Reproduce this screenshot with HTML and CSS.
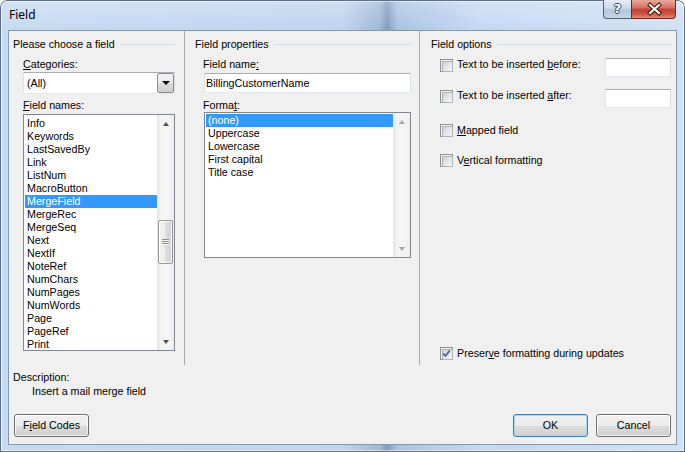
FILE: index.html
```html
<!DOCTYPE html>
<html lang="en">

<head>
  <meta charset="UTF-8">
  <meta name="viewport" content="width=device-width, initial-scale=1.0">
  <title>Field</title>
  <link rel="stylesheet" href="styles.css">
</head>

<body>
  <div class="window">
    <div class="titlebar">
      <span class="title">Field</span>
      <div class="caption-buttons">
        <div class="cap-btn help">?</div>
        <div class="cap-btn close">
          <svg width="45" height="19" viewBox="0 0 45 19">
            <path d="M18 5 L27 13 M27 5 L18 13" stroke="#3b1510" stroke-width="4.2" stroke-linecap="square" fill="none" />
            <path d="M18 5 L27 13 M27 5 L18 13" stroke="#ffffff" stroke-width="2.2" stroke-linecap="square" fill="none" />
          </svg>
        </div>
      </div>
    </div>

    <div class="client">
      <div class="columns">
        <!-- field picker -->
        <div class="col col-left">
          <div class="group-title">Please choose a field</div>
          <div class="group-body">
            <div class="label"><u>C</u>ategories:</div>
            <div class="combo">
              <span class="combo-text">(All)</span>
              <span class="combo-btn"><span class="tri-down"></span></span>
            </div>
            <div class="label label-gap"><u>F</u>ield names:</div>
            <div class="listbox names">
              <ul class="items">
                <li>Info</li>
                <li>Keywords</li>
                <li>LastSavedBy</li>
                <li>Link</li>
                <li>ListNum</li>
                <li>MacroButton</li>
                <li class="selected">MergeField</li>
                <li>MergeRec</li>
                <li>MergeSeq</li>
                <li>Next</li>
                <li>NextIf</li>
                <li>NoteRef</li>
                <li>NumChars</li>
                <li>NumPages</li>
                <li>NumWords</li>
                <li>Page</li>
                <li>PageRef</li>
                <li>Print</li>
              </ul>
              <div class="vscroll">
                <div class="arrow"><span class="tri-up"></span></div>
                <div class="track"><div class="thumb"><span class="grip"></span></div></div>
                <div class="arrow"><span class="tri-down small"></span></div>
              </div>
            </div>
          </div>
        </div>

        <!-- properties -->
        <div class="col col-mid">
          <div class="group-title">Field properties</div>
          <div class="group-body">
            <div class="label">Field name<u>:</u></div>
            <div class="textbox name-box">BillingCustomerName</div>
            <div class="label label-gap2">Forma<u>t</u>:</div>
            <div class="listbox formats">
              <ul class="items">
                <li class="selected">(none)</li>
                <li>Uppercase</li>
                <li>Lowercase</li>
                <li>First capital</li>
                <li>Title case</li>
              </ul>
              <div class="vscroll disabled">
                <div class="arrow"><span class="tri-up"></span></div>
                <div class="track"></div>
                <div class="arrow"><span class="tri-down small"></span></div>
              </div>
            </div>
          </div>
        </div>

        <!-- options -->
        <div class="col col-right">
          <div class="group-title">Field options</div>
          <div class="group-body options">
            <div class="opt opt-input first">
              <span class="check"></span>
              <span>Text to be inserted <u>b</u>efore:</span>
              <span class="textbox small-box"></span>
            </div>
            <div class="opt opt-input second">
              <span class="check"></span>
              <span>Text to be inserted <u>a</u>fter:</span>
              <span class="textbox small-box"></span>
            </div>
            <div class="opt mapped">
              <span class="check"></span>
              <span><u>M</u>apped field</span>
            </div>
            <div class="opt vertical">
              <span class="check"></span>
              <span>V<u>e</u>rtical formatting</span>
            </div>
            <div class="opt preserve">
              <span class="check checked">
                <svg width="9" height="9" viewBox="0 0 9 9">
                  <path d="M1.2 4.6 L3.5 7 L7.8 1.4" stroke="#4c5f8c" stroke-width="1.7" fill="none" />
                </svg>
              </span>
              <span>Preser<u>v</u>e formatting during updates</span>
            </div>
          </div>
        </div>
      </div>

      <div class="desc">Description:</div>
      <div class="desc-text">Insert a mail merge field</div>

      <div class="button-row">
        <button class="btn">F<u>i</u>eld Codes</button>
        <button class="btn default">OK</button>
        <button class="btn cancel">Cancel</button>
      </div>
    </div>
  </div>
</body>

</html>
```

FILE: styles.css
```css
* {
  box-sizing: border-box;
}

body {
  margin: 0;
  font-family: "Liberation Sans", Arial, sans-serif;
  font-size: 10.7px;
  line-height: 13px;
  color: #000;
  background: #fff;
}

u {
  text-decoration: underline;
}

/* aero frame */
.window {
  width: 685px;
  height: 452px;
  display: flex;
  flex-direction: column;
  padding: 0 8px 7px;
  border-radius: 7px 7px 0 0;
  background:
    linear-gradient(180deg, rgba(255, 255, 255, 0.25), rgba(255, 255, 255, 0) 30px),
    linear-gradient(90deg, #c6dbf2 0%, #bdd5ef 50%, #9fb9d6 55.5%, #7e9cbd 56.5%, #a9c4e2 58%, #c3d9f2 70%, #cfe2f6 100%);
  box-shadow: inset 0 0 0 1px #5d6f85, inset 0 0 0 2px rgba(255, 255, 255, 0.55);
}

.titlebar {
  height: 30px;
  display: flex;
  align-items: flex-start;
  padding-left: 1px;
}

.title {
  font-family: "Noto Sans", "Open Sans", sans-serif;
  font-size: 12px;
  line-height: 16px;
  margin-top: 7px;
}

.caption-buttons {
  display: flex;
  margin-left: auto;
  margin-right: 1px;
}

.cap-btn {
  height: 19px;
  border: 1px solid #4e5f74;
  border-top: none;
}

.help {
  width: 28px;
  border-right: none;
  border-radius: 0 0 0 4px;
  background: linear-gradient(180deg, #e4edf7 0%, #cbd9ea 45%, #b3c6dc 55%, #c5d6ea 100%);
  color: #fff;
  font-family: "DejaVu Sans", sans-serif;
  font-weight: bold;
  font-size: 13px;
  line-height: 18px;
  text-align: center;
  text-shadow: 1px 0 0 #34435a, -1px 0 0 #34435a, 0 1px 0 #34435a, 0 -1px 0 #34435a;
}

.close {
  width: 45px;
  border-color: #6e2a22;
  border-radius: 0 0 4px 0;
  background: linear-gradient(180deg, #e9a99b 0%, #d8786a 40%, #c2402f 55%, #cf5a45 80%, #e2917c 100%);
}

.close svg {
  display: block;
}

/* dialog body */
.client {
  flex: 1;
  display: flex;
  flex-direction: column;
  background: #f0f0f0;
  border: 1px solid #8698ad;
}

.columns {
  display: flex;
  height: 334px;
}

.col {
  display: flex;
  flex-direction: column;
  padding-top: 7px;
}

.col-left {
  width: 176px;
  padding-left: 4px;
  padding-right: 9px;
  border-right: 1px solid #a9a9a9;
}

.col-mid {
  width: 235px;
  padding-left: 10px;
  padding-right: 7px;
  border-right: 1px solid #a9a9a9;
}

.col-right {
  flex: 1;
  padding-left: 11px;
  padding-right: 4px;
}

.group-title {
  display: flex;
  align-items: center;
  height: 13px;
  white-space: nowrap;
}

.group-title::after {
  content: "";
  flex: 1;
  height: 1px;
  margin-left: 5px;
  background: #d5dfe5;
}

.col-left .group-body {
  padding-left: 10px;
}

.col-mid .group-body {
  padding-left: 8px;
}

.col-right .group-body {
  padding-left: 9px;
}

.label {
  margin-top: 7px;
}

.label-gap {
  margin-top: 5px;
}

.label-gap2 {
  margin-top: 6px;
}

/* combo box */
.combo {
  margin-top: 1px;
  height: 22px;
  display: flex;
  background: #fff;
  border: 1px solid #abadb3;
  border-color: #abadb3 #dbdfe6 #e3e9ef #e2e3ea;
}

.combo-text {
  flex: 1;
  padding: 4px 0 0 3px;
}

.combo-btn {
  width: 17px;
  display: flex;
  align-items: center;
  justify-content: center;
  border: 1px solid #8b8b8b;
  border-radius: 2px;
  background: linear-gradient(180deg, #f2f2f2 0%, #ebebeb 50%, #dddddd 51%, #cfcfcf 100%);
}

.tri-down {
  width: 0;
  height: 0;
  border-left: 4px solid transparent;
  border-right: 4px solid transparent;
  border-top: 4px solid #000;
}

.tri-down.small,
.tri-up {
  border-left-width: 3.5px;
  border-right-width: 3.5px;
}

.tri-down.small {
  border-top: 4px solid #4f4f4f;
}

.tri-up {
  width: 0;
  height: 0;
  border-left: 3.5px solid transparent;
  border-right: 3.5px solid transparent;
  border-bottom: 4px solid #4f4f4f;
}

/* text boxes */
.textbox {
  background: #fff;
  border: 1px solid #abadb3;
  border-color: #abadb3 #dbdfe6 #e3e9ef #e2e3ea;
}

.name-box {
  margin-top: 2px;
  margin-left: 1px;
  width: 207px;
  height: 20px;
  padding: 3px 0 0 1px;
}

/* list boxes */
.listbox {
  display: flex;
  background: #fff;
  border: 1px solid #828790;
}

.names {
  margin-top: 2px;
  width: 152px;
  height: 237px;
}

.formats {
  margin-left: 1px;
  width: 207px;
  height: 146px;
}

.items {
  flex: 1;
  list-style: none;
  margin: 0;
  padding: 2px 0 0 1px;
}

.formats .items {
  padding-top: 1px;
}

.items li {
  height: 13px;
  padding-left: 2px;
  white-space: nowrap;
}

.items li.selected {
  background: #3399ff;
  color: #fff;
}

.vscroll {
  width: 17px;
  display: flex;
  flex-direction: column;
  background: linear-gradient(90deg, #e6e6e6 0%, #f4f4f4 25%, #f4f4f4 75%, #ebebeb 100%);
}

.arrow {
  height: 17px;
  display: flex;
  align-items: center;
  justify-content: center;
}

.vscroll.disabled .tri-up {
  border-bottom-color: #a6a6a6;
}

.vscroll.disabled .tri-down.small {
  border-top-color: #a6a6a6;
}

.track {
  flex: 1;
  display: flex;
  flex-direction: column;
  align-items: center;
}

.thumb {
  margin-top: 88px;
  width: 15px;
  height: 44px;
  display: flex;
  align-items: center;
  justify-content: center;
  border: 1px solid #979797;
  border-radius: 2px;
  background: linear-gradient(90deg, #f4f4f4 0%, #ececec 45%, #dcdcdc 55%, #d2d2d2 100%);
  box-shadow: inset 0 0 0 1px rgba(255, 255, 255, 0.8);
}

.grip {
  width: 7px;
  height: 6px;
  background: repeating-linear-gradient(180deg, #8f8f8f 0 1px, #f6f6f6 1px 2px);
}

/* check options */
.options {
  flex: 1;
  display: flex;
  flex-direction: column;
}

.opt {
  display: flex;
  align-items: flex-start;
  gap: 4px;
  white-space: nowrap;
}

.opt-input {
  height: 19px;
}

.opt-input .check {
  margin-top: 1px;
}

.first {
  margin-top: 7px;
}

.second {
  margin-top: 12px;
}

.mapped {
  margin-top: 16px;
}

.vertical {
  margin-top: 17px;
}

.preserve {
  margin-top: auto;
  margin-bottom: 5px;
}

.small-box {
  margin-left: auto;
  margin-right: 1px;
  width: 66px;
  height: 19px;
}

.check {
  flex: none;
  width: 13px;
  height: 13px;
  padding: 1px;
  border: 1px solid #8e8f8f;
  background: #f4f4f4;
}

.check::before {
  content: "";
  display: block;
  width: 9px;
  height: 9px;
  border: 1px solid #aeb3b9;
  background: linear-gradient(135deg, #cbcfd5 0%, #e4e6e9 50%, #f6f6f6 100%);
}

.check.checked {
  position: relative;
}

.check.checked svg {
  position: absolute;
  left: 1px;
  top: 1px;
}

/* footer */
.desc {
  margin-top: 6px;
  padding-left: 4px;
}

.desc-text {
  margin-top: 1px;
  padding-left: 23px;
}

.button-row {
  display: flex;
  margin-top: 16px;
  padding: 0 5px;
}

.btn {
  width: 75px;
  height: 23px;
  padding: 0;
  font: inherit;
  color: #000;
  border: 1px solid #707070;
  border-radius: 3px;
  background: linear-gradient(180deg, #f2f2f2 0%, #ebebeb 50%, #dddddd 51%, #cfcfcf 100%);
  box-shadow: inset 0 0 0 1px rgba(255, 255, 255, 0.75);
}

.btn.default {
  margin-left: auto;
  border-color: #3c7fb1;
  box-shadow: inset 0 0 0 1px #a6dbf6;
}

.btn.cancel {
  margin-left: 8px;
}
```
